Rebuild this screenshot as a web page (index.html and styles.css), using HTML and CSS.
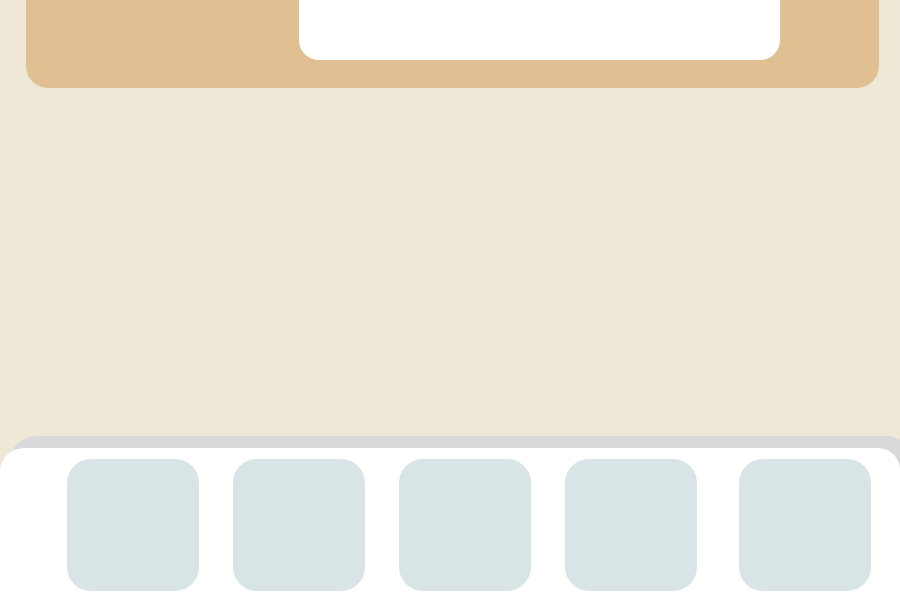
FILE: index.html
```html
<!DOCTYPE html>
<html>
<head>
<meta charset="utf-8">
<link rel="stylesheet" href="styles.css">
</head>
<body>
<div class="app">
  <header class="top">
    <div class="top-card"></div>
  </header>
  <main class="content"></main>
  <footer class="sheet-wrap">
    <div class="sheet">
      <div class="tile"></div>
      <div class="tile"></div>
      <div class="tile"></div>
      <div class="tile"></div>
      <div class="tile tile-last"></div>
    </div>
  </footer>
</div>
</body>
</html>
```
FILE: styles.css
```css
html, body {
  margin: 0;
  padding: 0;
  height: 100%;
  overflow: hidden;
  background: #efe8d7;
  font-family: "Liberation Sans", Arial, sans-serif;
}
.app {
  height: 600px;
  display: flex;
  flex-direction: column;
}
.top {
  margin: 0 21px 0 26px;
  height: 88px;
  background: #e0c092;
  border-radius: 0 0 22px 22px;
  display: flex;
  flex-shrink: 0;
}
.top-card {
  margin-left: 273px;
  width: 481px;
  height: 60px;
  background: #ffffff;
  border-radius: 0 0 20px 20px;
}
.content {
  flex: 1;
}
.sheet-wrap {
  position: relative;
  padding-top: 12px;
  flex-shrink: 0;
  overflow: hidden;
}
.sheet-wrap::before {
  content: "";
  position: absolute;
  top: 0;
  left: 10px;
  right: -12px;
  height: 60px;
  background: #d9d9db;
  border-radius: 26px 26px 0 0;
}
.sheet {
  position: relative;
  height: 152px;
  box-sizing: border-box;
  background: #ffffff;
  border-radius: 24px 22px 0 0;
  padding: 11px 30px 0 67px;
  display: flex;
  align-items: flex-start;
  gap: 34px;
}
.tile {
  width: 132px;
  height: 132px;
  flex-shrink: 0;
  background: #d9e4e6;
  border-radius: 24px;
}
.tile-last {
  margin-left: 8px;
}
```
